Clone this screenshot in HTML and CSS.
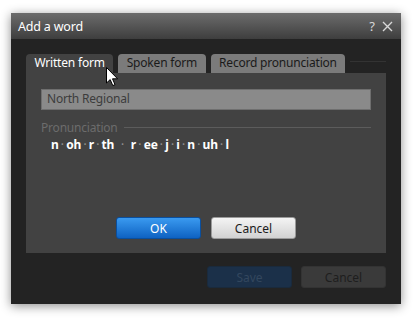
FILE: index.html
```html
<!DOCTYPE html>
<html lang="en">
<head>
  <meta charset="UTF-8" />
  <title>Add a word</title>
  <link rel="stylesheet" href="styles.css">
</head>
<body>
  <div class="dialog">
    <div class="title-bar">
      <span class="title">Add a word</span>
      <div class="title-btns">
        <span>?</span>
        <svg width="11" height="11" viewBox="0 0 11 11"><path d="M1 1 L10 10 M10 1 L1 10" stroke="#d8d8d8" stroke-width="1.4"/></svg>
      </div>
    </div>

    <div class="body">
      <div class="tabs">
        <div class="tab active">Written form</div>
        <div class="tab">Spoken form</div>
        <div class="tab">Record pronunciation</div>
        <div class="tab-line"></div>
      </div>

      <div class="panel">
        <div class="word-input">North Regional</div>
        <div class="section-label">
          <span>Pronunciation</span>
          <div class="rule"></div>
        </div>
        <div class="phonemes">
          <b>n</b><i>•</i><b>oh</b><i>•</i><b>r</b><i>•</i><b>th</b><i class="wide">•</i><b>r</b><i>•</i><b>ee</b><i>•</i><b>j</b><i>•</i><b>i</b><i>•</i><b>n</b><i>•</i><b>uh</b><i>•</i><b>l</b>
        </div>
        <div class="panel-btns">
          <button class="btn btn-ok">OK</button>
          <button class="btn btn-cancel">Cancel</button>
        </div>
      </div>

      <div class="footer">
        <button class="btn btn-save">Save</button>
        <button class="btn btn-dark">Cancel</button>
      </div>
    </div>

    <svg class="cursor" width="13" height="20" viewBox="0 0 13 20">
      <path d="M0.5 0.5 L0.5 16 L4.2 12.6 L6.8 18.6 L9 17.6 L6.5 11.8 L11.6 11.8 Z" fill="#fff" stroke="#000" stroke-width="1"/>
    </svg>
  </div>
</body>
</html>
```

FILE: styles.css
```css
body {
  margin: 0;
  padding: 0;
  background: #ffffff;
  font-family: 'Noto Sans', 'Open Sans', sans-serif;
  width: 415px;
  height: 318px;
  overflow: hidden;
}

.dialog {
  position: relative;
  margin: 13px 0 0 11px;
  width: 390px;
  height: 291px;
  background: #232323;
  display: flex;
  flex-direction: column;
  box-shadow: 0 2px 10px rgba(0, 0, 0, 0.45);
}

.title-bar {
  height: 26px;
  background: linear-gradient(#6c6c6c, #3e3e3e);
  display: flex;
  align-items: center;
  justify-content: space-between;
  padding: 0 8px 0 7px;
}

.title {
  color: #ffffff;
  font-size: 12.5px;
  letter-spacing: -0.2px;
}

.title-btns {
  display: flex;
  align-items: center;
  gap: 7px;
  color: #d8d8d8;
  font-size: 13px;
}

.body {
  flex: 1;
  padding: 15px 15px 0 15px;
}

.tabs {
  display: flex;
  align-items: flex-end;
  height: 19px;
  gap: 5px;
}

.tab {
  height: 19px;
  padding: 0 8.5px;
  background: #7b7b7b;
  border-radius: 4px 4px 0 0;
  color: #1a1a1a;
  font-size: 12px;
  letter-spacing: -0.2px;
  line-height: 18px;
  box-sizing: border-box;
}

.tab.active {
  background: #424242;
  color: #ffffff;
}

.tab-line {
  flex: 1;
  align-self: flex-start;
  margin-top: 7px;
  height: 1px;
  background: #333333;
}

.panel {
  height: 180px;
  background: #424242;
  padding: 16px 15px 0 15px;
  box-sizing: border-box;
  display: flex;
  flex-direction: column;
}

.word-input {
  height: 21px;
  background: #8a8a8a;
  border: 1px solid #6f6f6f;
  box-sizing: border-box;
  color: #3c3c3c;
  font-size: 12px;
  padding-left: 5px;
  line-height: 18px;
  letter-spacing: -0.2px;
}

.section-label {
  display: flex;
  align-items: center;
  gap: 6px;
  margin-top: 9px;
  color: #6c6c6c;
  font-size: 12px;
  letter-spacing: -0.2px;
  height: 16px;
}

.rule {
  flex: 1;
  height: 1px;
  background: #5c5c5c;
  margin-top: 1px;
}

.phonemes {
  margin-top: 1px;
  padding-left: 10px;
  display: flex;
  align-items: center;
  height: 16px;
}

.phonemes b {
  color: #ffffff;
  font-size: 12px;
  font-weight: bold;
  letter-spacing: -0.2px;
}

.phonemes i {
  font-style: normal;
  color: #8e8e8e;
  font-size: 7px;
  margin: 0 2.5px;
}

.phonemes i.wide {
  margin: 0 7px;
}

.panel-btns {
  display: flex;
  justify-content: center;
  gap: 10px;
  margin-top: 65px;
}

.btn {
  width: 85px;
  height: 22px;
  border-radius: 3px;
  font-family: 'Noto Sans', 'Open Sans', sans-serif;
  font-size: 12px;
  padding: 0;
  box-sizing: border-box;
}

.btn-ok {
  background: linear-gradient(#3a9af0, #0e62c2);
  border: 1px solid #0a4f9e;
  color: #ffffff;
}

.btn-cancel {
  background: linear-gradient(#f4f4f4, #d2d2d2);
  border: 1px solid #9a9a9a;
  color: #1a1a1a;
}

.footer {
  display: flex;
  justify-content: flex-end;
  gap: 9px;
  margin-top: 13px;
}

.btn-save {
  background: #1b3049;
  border: 1px solid #1a2a3c;
  color: #33475e;
}

.btn-dark {
  background: #3a3a3a;
  border: 1px solid #333333;
  color: #1e1e1e;
}

.cursor {
  position: absolute;
  left: 95px;
  top: 54px;
}
```
